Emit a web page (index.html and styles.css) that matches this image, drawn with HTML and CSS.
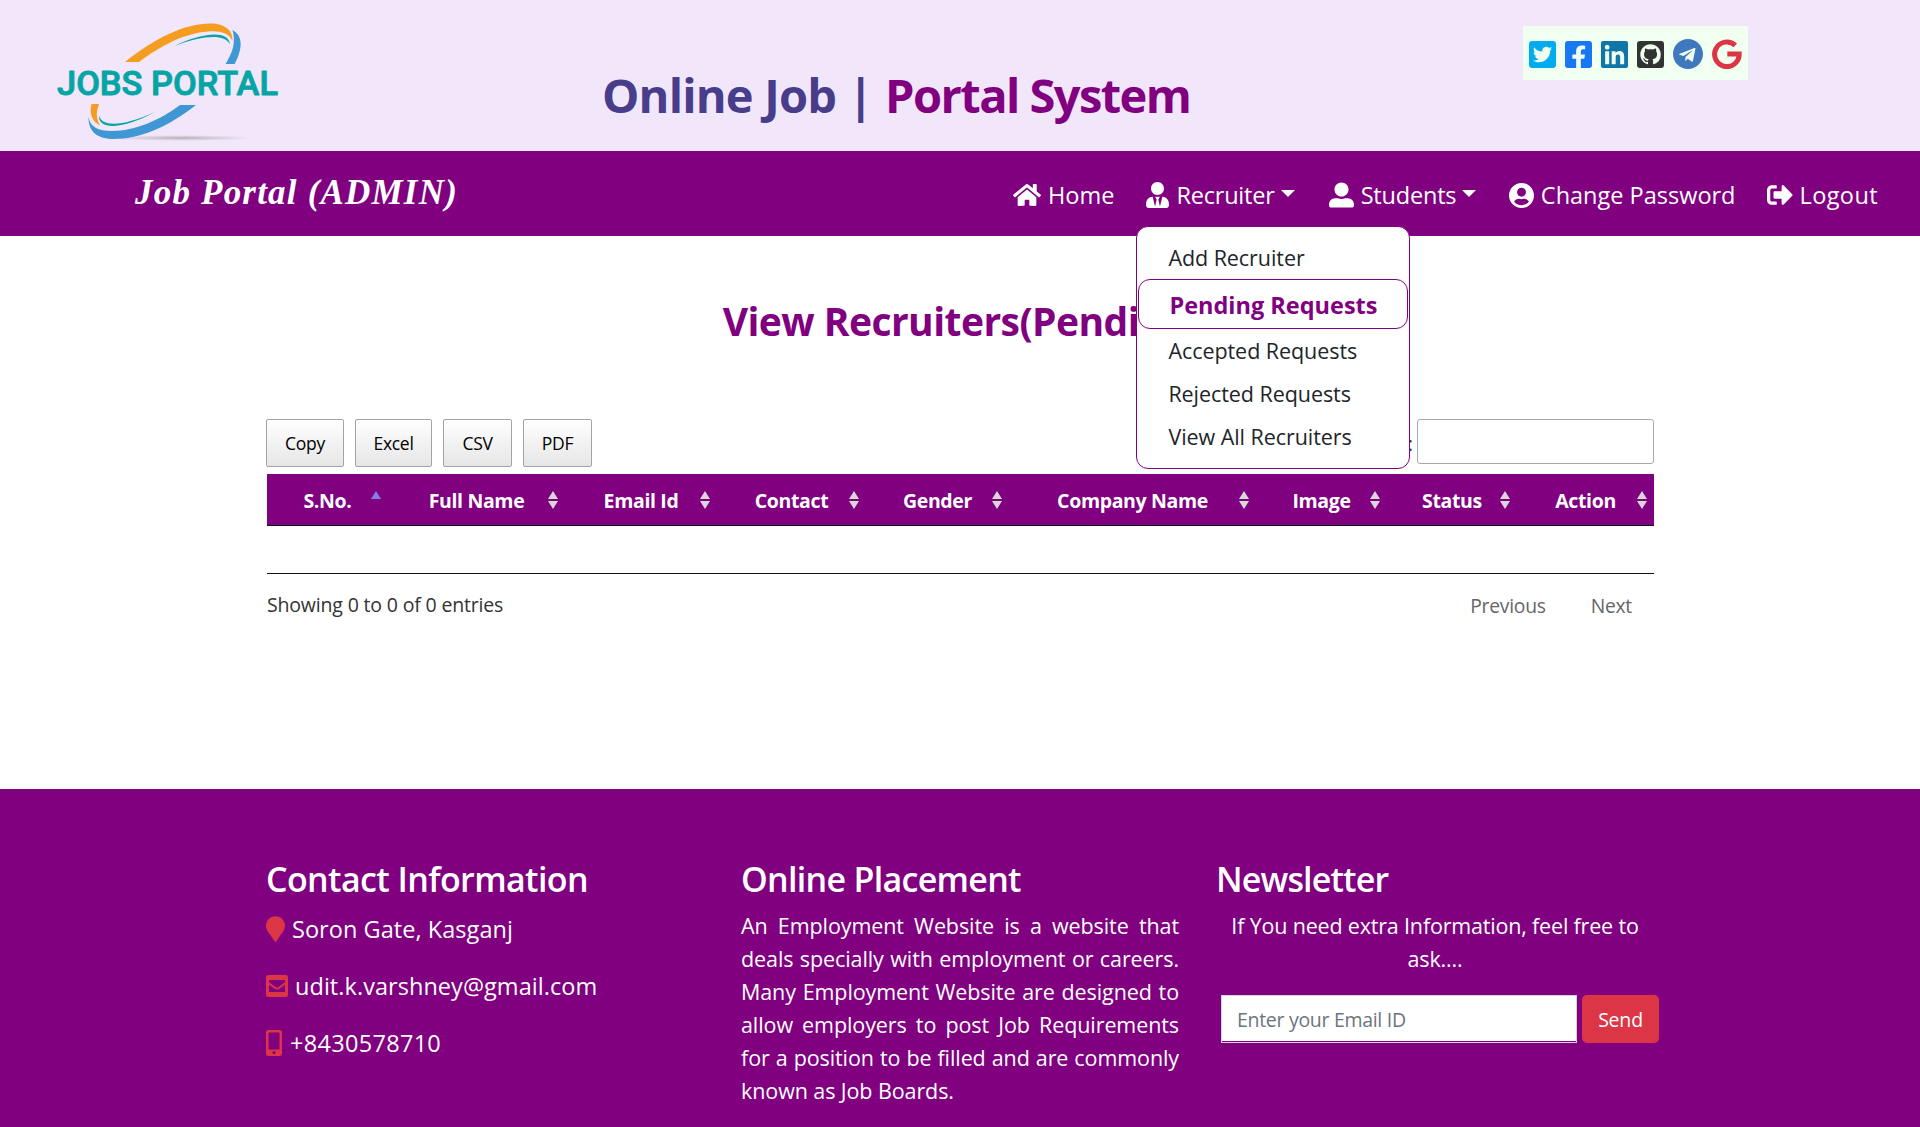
FILE: index.html
```html
<!DOCTYPE html>
<html lang="en">
<head>
<meta charset="utf-8">
<title>Online Job Portal System</title>
<link rel="stylesheet" href="styles.css">
</head>
<body>
<header class="top">
  <svg class="logo" viewBox="0 0 300 151">
    <defs><radialGradient id="shade"><stop offset="0" stop-color="#aaa" stop-opacity=".9"/><stop offset="1" stop-color="#bbb" stop-opacity="0"/></radialGradient></defs>
    <ellipse cx="181" cy="138" rx="73" ry="3" fill="url(#shade)"/>
    <path fill="#f59d20" d="M125 62C155 38 185 23.5 210 23.5C226 23.5 233 31 232.5 41C229 33 220 30.5 208 31.5C185 33 160 46 139 62Z"/>
    <path fill="#05a5a5" d="M175 45.7C195 36 228 27 230 44.5C224 33 202 36 175 45.7Z"/>
    <path fill="#3f97d3" d="M232.5 30C243 36 243 48 234.7 64H225.5C233 52 236 42 232.5 30Z"/>
    <path fill="#f59d20" d="M91.500 104H99C96 112 96 118 100 125.500C92 121 89 114 91.500 104Z"/>
    <path fill="#05a5a5" d="M99 115.500C102 127 122 127 155 112C122 130 98 130 99 115.500Z"/>
    <path fill="#3f97d3" d="M88.600 117C88 132 98 139 114 139C140 139 168 127 196 105H180C160 120 135 131 112 131C98 131 90 127 88.600 117Z"/>
    <text class="logo-text" x="57" y="95" textLength="221" lengthAdjust="spacingAndGlyphs">JOBS PORTAL</text>
  </svg>
  <h1 class="title"><span class="title-a">Online Job |</span> <span class="title-b">Portal System</span></h1>
  <div class="social">
    <svg class="sq" viewBox="0 32 448 448" fill="#00acee"><path d="M400 32H48C21.500 32 0 53.500 0 80v352c0 26.500 21.500 48 48 48h352c26.500 0 48-21.500 48-48V80c0-26.500-21.500-48-48-48zm-48.900 158.800c.2 2.800.2 5.700.2 8.500 0 86.700-66 186.600-186.600 186.600-37.200 0-71.700-10.800-100.700-29.400 5.300.6 10.400.8 15.800.8 30.700 0 58.900-10.400 81.400-28-28.800-.6-53-19.500-61.300-45.500 10.100 1.500 19.200 1.500 29.600-1.200-30-6.100-52.500-32.500-52.500-64.400v-.8c8.700 4.900 18.900 7.900 29.600 8.300a65.447 65.447 0 0 1-29.200-54.600c0-12.200 3.200-23.400 8.900-33.100 32.300 39.800 80.800 65.800 135.200 68.600-9.300-44.500 24-80.600 64-80.600 18.900 0 35.900 7.900 47.900 20.700 14.800-2.800 29-8.300 41.600-15.800-4.900 15.200-15.200 28-28.800 36.100 13.200-1.400 26-5.100 37.800-10.200-8.900 13.100-20.100 24.700-32.900 34z"/></svg>
    <svg class="sq" viewBox="0 32 448 448" fill="#1877f2"><path d="M400 32H48A48 48 0 0 0 0 80v352a48 48 0 0 0 48 48h137.250V327.690h-63V256h63v-54.640c0-62.150 37-96.480 93.670-96.480 27.140 0 55.520 4.840 55.520 4.840v61h-31.270c-30.810 0-40.420 19.120-40.420 38.730V256h68.780l-11 71.690h-57.780V480H400a48 48 0 0 0 48-48V80a48 48 0 0 0-48-48z"/></svg>
    <svg class="sq" viewBox="0 32 448 448" fill="#0e76a8"><path d="M416 32H31.900C14.300 32 0 46.500 0 64.300v383.400C0 465.500 14.300 480 31.900 480H416c17.600 0 32-14.500 32-32.300V64.300c0-17.800-14.400-32.300-32-32.300zM135.400 416H69V202.200h66.500V416zm-33.200-243c-21.300 0-38.500-17.300-38.500-38.500S80.900 96 102.200 96c21.200 0 38.500 17.300 38.500 38.500 0 21.300-17.200 38.500-38.500 38.500zm282.100 243h-66.400V312c0-24.800-.5-56.700-34.500-56.700-34.600 0-39.900 27-39.900 54.900V416h-66.400V202.200h63.700v29.200h.9c8.900-16.800 30.600-34.500 62.900-34.500 67.200 0 79.700 44.300 79.700 101.900V416z"/></svg>
    <svg class="sq" viewBox="0 0 27 27"><rect width="27" height="27" rx="3" fill="#333"/><path fill="#f0fff0" transform="translate(3.300 3.300) scale(1.280)" d="M8 0C3.580 0 0 3.580 0 8c0 3.540 2.290 6.530 5.470 7.590.4.070.55-.17.55-.38 0-.19-.01-.82-.01-1.490-2.010.37-2.530-.49-2.690-.94-.09-.23-.48-.94-.82-1.130-.28-.15-.68-.52-.01-.53.63-.01 1.080.58 1.230.82.72 1.210 1.870.87 2.330.66.070-.52.28-.87.51-1.070-1.780-.2-3.640-.89-3.640-3.950 0-.87.31-1.590.82-2.150-.08-.2-.36-1.020.08-2.120 0 0 .67-.21 2.200.82.64-.18 1.320-.27 2-.27s1.360.09 2 .27c1.530-1.040 2.200-.82 2.200-.82.44 1.100.16 1.920.08 2.120.51.56.82 1.270.82 2.150 0 3.070-1.870 3.750-3.650 3.950.29.25.54.73.54 1.480 0 1.070-.01 1.930-.01 2.200 0 .21.15.46.55.38A8.010 8.010 0 0 0 16 8c0-4.420-3.580-8-8-8z"/></svg>
    <svg class="round" viewBox="0 8 496 496" fill="#4078c0"><path d="M248 8C111 8 0 119 0 256s111 248 248 248 248-111 248-248S385 8 248 8zm121.800 169.900l-40.700 191.800c-3 13.600-11.100 16.900-22.400 10.500l-62-45.700-29.900 28.800c-3.300 3.300-6.100 6.100-12.500 6.100l4.400-63.100 114.900-103.800c5-4.400-1.100-6.900-7.700-2.500l-142 89.400-61.200-19.100c-13.300-4.200-13.600-13.300 2.800-19.700l239.100-92.200c11.100-4 20.800 2.700 17.200 19.500z"/></svg>
    <svg class="gee" viewBox="0 0 30 30" fill="none" stroke="#dc3545" stroke-width="5"><path d="M23.300 6.300A12.300 12.300 0 1 0 27.200 15H15.300"/></svg>
  </div>
</header>

<nav class="nav">
  <a class="brand">Job Portal (ADMIN)</a>
  <div class="menu">
    <a class="item home"><svg viewBox="0 32 576 448" width="28" height="22"><path d="M280.370 148.260L96 300.110V464a16 16 0 0 0 16 16l112.060-.29a16 16 0 0 0 15.920-16V368a16 16 0 0 1 16-16h64a16 16 0 0 1 16 16v95.640a16 16 0 0 0 16 16.050L464 480a16 16 0 0 0 16-16V300L295.670 148.260a12.190 12.190 0 0 0-15.300 0zM571.600 251.470L488 182.560V44.050a12 12 0 0 0-12-12h-56a12 12 0 0 0-12 12v72.610L318.470 43a48 48 0 0 0-61 0L4.340 251.470a12 12 0 0 0-1.600 16.900l25.500 31A12 12 0 0 0 45.150 301l235.220-193.740a12.190 12.190 0 0 1 15.300 0L530.900 301a12 12 0 0 0 16.900-1.600l25.500-31a12 12 0 0 0-1.700-16.930z"/></svg><span>Home</span></a>
    <div class="item recruiter"><svg viewBox="0 0 448 512" width="23" height="26"><path d="M224 256c70.700 0 128-57.300 128-128S294.700 0 224 0 96 57.300 96 128s57.300 128 128 128zm95.800 32.600L272 480l-32-136 32-56h-96l32 56-32 136-47.800-191.400C56.900 292 0 350.300 0 422.400V464c0 26.500 21.500 48 48 48h352c26.500 0 48-21.500 48-48v-41.600c0-72.100-56.900-130.400-128.200-133.800z"/></svg><span>Recruiter</span><i class="caret"></i>
      <div class="dropdown">
        <a>Add Recruiter</a>
        <a class="active">Pending Requests</a>
        <a>Accepted Requests</a>
        <a>Rejected Requests</a>
        <a>View All Recruiters</a>
      </div>
    </div>
    <a class="item students"><svg viewBox="0 0 512 512" width="25" height="26"><path d="M256 288c79.500 0 144-64.500 144-144S335.500 0 256 0 112 64.500 112 144s64.500 144 144 144zm128 32h-55.100c-22.200 10.200-46.900 16-72.900 16s-50.600-5.800-72.900-16H128C57.300 320 0 377.300 0 448v16c0 26.500 21.500 48 48 48h416c26.500 0 48-21.500 48-48v-16c0-70.700-57.300-128-128-128z"/></svg><span>Students</span><i class="caret"></i></a>
    <a class="item password"><svg viewBox="0 8 496 496" width="25" height="25"><path d="M248 8C111 8 0 119 0 256s111 248 248 248 248-111 248-248S385 8 248 8zm0 96c48.600 0 88 39.400 88 88s-39.400 88-88 88-88-39.400-88-88 39.400-88 88-88zm0 344c-58.700 0-111.300-26.600-146.500-68.200 18.800-35.400 55.600-59.800 98.500-59.800 2.400 0 4.800.4 7.100 1.100 13 4.200 26.600 6.900 40.900 6.900 14.300 0 28-2.700 40.900-6.900 2.300-.7 4.700-1.100 7.100-1.100 42.900 0 79.700 24.400 98.500 59.800C359.300 421.400 306.700 448 248 448z"/></svg><span>Change Password</span></a>
    <a class="item logout"><svg viewBox="0 0 512 512" width="26" height="26"><path d="M497 273L329 441c-15 15-41 4.500-41-17v-96H152c-13.300 0-24-10.700-24-24v-96c0-13.300 10.700-24 24-24h136V88c0-21.400 25.900-32 41-17l168 168c9.300 9.400 9.300 24.600 0 34zM192 436v-40c0-6.600-5.400-12-12-12H96c-17.700 0-32-14.300-32-32V160c0-17.700 14.300-32 32-32h84c6.600 0 12-5.400 12-12V76c0-6.600-5.400-12-12-12H96c-53 0-96 43-96 96v192c0 53 43 96 96 96h84c6.600 0 12-5.400 12-12z"/></svg><span>Logout</span></a>
  </div>
</nav>

<main class="content">
  <h2 class="heading">View Recruiters(Pending)</h2>
  <div class="tools">
    <div class="buttons">
      <button class="btn copy">Copy</button><button class="btn excel">Excel</button><button class="btn csv">CSV</button><button class="btn pdf">PDF</button>
    </div>
    <label class="search"><span>Search:</span><input type="text"></label>
  </div>
  <table class="grid">
    <colgroup><col class="c1"><col class="c2"><col class="c3"><col class="c4"><col class="c5"><col class="c6"><col class="c7"><col class="c8"><col class="c9"></colgroup>
    <thead><tr><th class="asc">S.No.</th><th>Full Name</th><th>Email Id</th><th>Contact</th><th>Gender</th><th>Company Name</th><th>Image</th><th>Status</th><th>Action</th></tr></thead>
    <tbody><tr><td colspan="9"></td></tr></tbody>
  </table>
  <div class="status">
    <span class="info">Showing 0 to 0 of 0 entries</span>
    <div class="pager"><a class="prev">Previous</a><a class="next">Next</a></div>
  </div>
</main>

<footer class="footer">
  <section class="col">
    <h3 class="ci">Contact Information</h3>
    <p class="line"><svg width="19" height="26" viewBox="0 0 384 512"><path d="M172.268 501.670C26.970 291.031 0 269.413 0 192 0 85.961 85.961 0 192 0s192 85.961 192 192c0 77.413-26.970 99.031-172.268 309.670-9.535 13.774-29.930 13.773-39.464 0z"/></svg><span class="addr">Soron Gate, Kasganj</span></p>
    <p class="line"><svg width="22" height="22" viewBox="0 0 22 22"><path fill-rule="evenodd" d="M2.500 0h17A2.500 2.500 0 0 1 22 2.500v17a2.500 2.500 0 0 1-2.500 2.500h-17A2.500 2.500 0 0 1 0 19.500v-17A2.500 2.500 0 0 1 2.500 0ZM3 5V7.200L9.500 12Q11 13 12.500 12L19 7.200V5ZM3 9.700V17H19V9.700L13.500 13.700Q11 15.300 8.500 13.700Z"/></svg><span class="mail">udit.k.varshney@gmail.com</span></p>
    <p class="line"><svg width="16" height="26" viewBox="0 0 16 26"><path fill-rule="evenodd" d="M2.500 0h11A2.500 2.500 0 0 1 16 2.500v21a2.500 2.500 0 0 1-2.500 2.500h-11A2.500 2.500 0 0 1 0 23.500v-21A2.500 2.500 0 0 1 2.500 0ZM2.500 2.500V19.500H13.500V2.500ZM8 21A1.600 1.600 0 1 0 8 24.200 1.600 1.600 0 1 0 8 21Z"/></svg><span class="phone">+8430578710</span></p>
  </section>
  <section class="col">
    <h3 class="op">Online Placement</h3>
    <p class="about">An Employment Website is a website that deals specially with employment or careers. Many Employment Website are designed to allow employers to post Job Requirements for a position to be filled and are commonly known as Job Boards.</p>
  </section>
  <section class="col">
    <h3 class="nl">Newsletter</h3>
    <p class="ask">If You need extra Information, feel free to ask....</p>
    <form class="form"><input type="text" placeholder="Enter your Email ID"><button type="button"><span>Send</span></button></form>
  </section>
</footer>
</body>
</html>
```
FILE: styles.css
```css
* { box-sizing: border-box; }
body { margin: 0; background: #fff; color: #212529; font-family: "Open Sans", "Noto Sans", sans-serif; font-size: 20px; overflow: hidden; }
h1, h2, h3, p { margin: 0; }

.top { display: flex; align-items: flex-start; height: 151px; background: #f2e6fb; }
.logo { width: 300px; height: 151px; }
.logo-text { font: 500 34px Roboto, sans-serif; fill: #05a5a5; stroke: #05a5a5; stroke-width: 0.900px; stroke-linejoin: round; }
.title { margin: 61px 0 0 302px; width: 590px; font-size: 47px; font-weight: 700; line-height: 68px; white-space: nowrap; }
.title-a { color: #483d8b; letter-spacing: -0.800px; }
.title-b { color: #800080; letter-spacing: -1.550px; }
.social { display: flex; align-items: center; margin: 26px 0 0 331px; width: 225px; height: 54px; padding: 2px 0 0 6px; gap: 9px; background: #f0fff0; }
.sq { width: 27px; height: 27px; }
.round { width: 30px; height: 30px; }
.gee { width: 30px; height: 30px; }

.nav { display: flex; justify-content: space-between; height: 85px; padding: 0 42px 0 135px; background: #800080; color: #fff; }
.brand { font: italic 700 35px/84px "Monotype Corsiva", "Liberation Serif", serif; letter-spacing: 1.200px; }
.menu { display: flex; }
.item { position: relative; display: flex; align-items: center; height: 88px; gap: 7px; font-size: 23.500px; white-space: nowrap; }
.item svg { fill: #fff; }
.caret { margin: -4px 0 0 -1px; border: 7.500px solid transparent; border-top-color: #fff; border-bottom: 0; }
.recruiter, .students { letter-spacing: -0.200px; }
.recruiter { margin-left: 32px; }
.password { margin-left: 32.500px; }
.students { margin-left: 34px; }
.logout { margin-left: 31px; letter-spacing: 0.400px; }
.dropdown { position: absolute; left: -10px; top: 75px; z-index: 2; width: 274px; height: 243px; padding: 9px 1px; background: #fff; border: 1px solid #800080; border-radius: 12px; color: #212529; font-size: 21.500px; letter-spacing: -0.060px; }
.dropdown a { display: block; height: 43px; padding: 0 30px; line-height: 43px; }
.dropdown .active { height: 50px; line-height: 50px; border: 1px solid #800080; border-radius: 12px; font-size: 23.500px; font-weight: 700; letter-spacing: 0; color: #800080; }

.content { width: 1387px; height: 553px; margin: 0 auto 0 267px; padding-top: 55px; }
.heading { height: 60px; line-height: 60px; font-size: 39px; text-align: center; color: #800080; letter-spacing: -0.550px; }
.tools { display: flex; justify-content: space-between; margin: 68px 0 0 -1px; height: 55px; }
.buttons { display: flex; align-items: flex-start; gap: 11px; }
.btn { height: 48px; padding: 0; border: 1px solid #a3a3a3; border-radius: 2px; background: linear-gradient(#fff, #e6e6e6); color: #000; font: 17.500px "Open Sans", sans-serif; letter-spacing: -0.300px; }
.copy { width: 78px; } .excel { width: 77px; } .csv, .pdf { width: 69px; }
.search { display: flex; gap: 4px; line-height: 50px; color: #333; }
.search input { width: 237px; height: 45px; border: 1px solid #aaa; border-radius: 3px; background: #fff; }

.grid { width: 1387px; table-layout: fixed; border-collapse: separate; border-spacing: 0; }
.c1 { width: 121px; } .c2 { width: 177px; } .c3 { width: 152px; } .c4 { width: 149px; } .c5 { width: 143px; } .c6 { width: 247px; } .c7 { width: 131px; } .c8 { width: 130px; } .c9 { width: 137px; }
.grid th { position: relative; height: 52px; padding: 1px 0 0; background: #800080; border-bottom: 1px solid #111; color: #fff; font-weight: 700; font-size: 19.500px; letter-spacing: -0.350px; }
.grid th::before, .grid th::after { content: ""; position: absolute; right: 7px; border: 5px solid transparent; }
.grid th::before { top: 17px; border-top: 0; border-bottom: 8px solid #d8d8d8; }
.grid th::after { top: 27px; border-bottom: 0; border-top: 8px solid #d8d8d8; }
.grid th.asc::before { border-bottom-color: #8080e0; }
.grid th.asc::after { display: none; }
.grid td { height: 48px; padding: 0; border-bottom: 1px solid #111; }
.status { display: flex; justify-content: space-between; padding-top: 16px; line-height: 30px; color: #333; }
.info { font-size: 19.500px; letter-spacing: -0.170px; }
.pager { display: flex; gap: 45px; padding: 1px 22px 0 0; font-size: 19.300px; letter-spacing: -0.250px; color: #666; }

.footer { display: grid; grid-template-columns: 438px 438px 442px; column-gap: 37px; height: 338px; padding: 66px 0 0 266px; background: #800080; color: #fff; }
.footer h3 { height: 50px; line-height: 49px; font-size: 34px; font-weight: 600; letter-spacing: -0.700px; white-space: nowrap; }
.footer .ci { letter-spacing: -0.600px; }
.footer .nl { letter-spacing: -0.850px; }
.line { display: flex; align-items: center; height: 57px; margin-top: -5px; margin-bottom: 5px; gap: 7px; font-size: 23.500px; letter-spacing: 0.050px; }
.line svg { fill: #dc3545; }
.phone { padding-left: 1px; letter-spacing: 0.300px; }
.about { margin-top: 4px; width: 438px; font-size: 21.500px; line-height: 33px; text-align: justify; letter-spacing: -0.090px; }
.ask { margin-top: 4px; width: 438px; font-size: 21.500px; line-height: 33px; text-align: center; letter-spacing: -0.180px; }
.form { display: flex; gap: 5px; margin: 20px -1px 0 5px; }
.form input { flex: none; width: 356px; height: 48px; padding: 0 15px; border: 1px solid #ced4da; background: #fff; box-shadow: inset 0 -1px #800080; font: 19.500px "Open Sans", sans-serif; letter-spacing: -0.300px; }
.form input::placeholder { color: #6c757d; }
.form button { flex: none; width: 77px; height: 48px; padding: 0; border: 0; border-radius: 5px; background: #dc3545; color: #fff; font: 19.500px "Open Sans", sans-serif; letter-spacing: -0.200px; }
```
